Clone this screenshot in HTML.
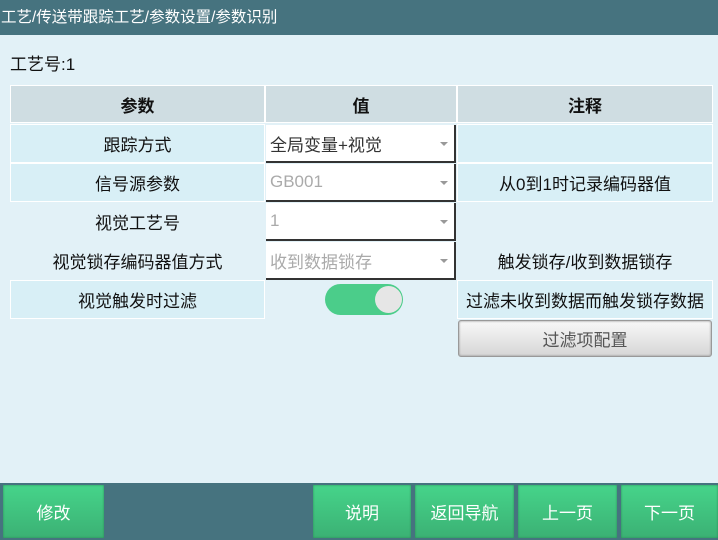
<!DOCTYPE html>
<html><head><meta charset="utf-8"><style>
*{margin:0;padding:0;box-sizing:border-box}
body{width:718px;height:540px;background:#e2f1f7;font-family:"Liberation Sans","Noto Sans CJK SC",sans-serif;position:relative;overflow:hidden;color:#111}
.hdr{position:absolute;left:0;top:0;width:718px;height:35px;background:#46737f;color:#fff;font-size:15.5px;line-height:35px;padding-left:1px}
.a{position:absolute;display:flex;align-items:center;justify-content:center;font-size:17px;white-space:nowrap}
.th{background:#cfdde2;font-weight:bold;border:1px solid #fff}
.lb{background:#d8eff6;border:1px solid #fff}
.dd{background:#fff;justify-content:flex-start;padding-left:4px;border-right:2px solid #333;border-bottom:2px solid #333;color:#333}
.dd.g{color:#aaa}
.dd:after{content:"";position:absolute;right:6px;top:50%;border:4px solid transparent;border-top:4px solid #999;margin-top:-1px}
.bar{position:absolute;left:0;top:483px;width:718px;height:57px;background:#46737f}
.btn{position:absolute;top:485px;height:53px;background:linear-gradient(#46d48a,#3bb174);color:#fff;font-size:17px;display:flex;align-items:center;justify-content:center;box-shadow:inset 0 0 2px #2a8a55}
</style></head><body>
<div class="hdr">工艺/传送带跟踪工艺/参数设置/参数识别</div>
<div class="a" style="left:10px;top:50px;height:24px;">工艺号:1</div>
<div class="a th" style="left:10px;top:85px;width:255px;height:38px">参数</div>
<div class="a th" style="left:265px;top:85px;width:192px;height:38px">值</div>
<div class="a th" style="left:457px;top:85px;width:256px;height:38px">注释</div>

<div class="a lb" style="left:10px;top:124px;width:255px;height:39px">跟踪方式</div>
<div class="a dd" style="left:266px;top:125px;width:190px;height:38px">全局变量+视觉</div>
<div class="a lb" style="left:457px;top:124px;width:256px;height:39px"></div>

<div class="a lb" style="left:10px;top:163px;width:255px;height:39px">信号源参数</div>
<div class="a dd g" style="left:266px;top:164px;width:190px;height:38px">GB001</div>
<div class="a lb" style="left:457px;top:163px;width:256px;height:39px">从0到1时记录编码器值</div>

<div class="a" style="left:10px;top:202px;width:255px;height:39px">视觉工艺号</div>
<div class="a dd g" style="left:266px;top:203px;width:190px;height:38px">1</div>

<div class="a" style="left:10px;top:241px;width:255px;height:39px">视觉锁存编码器值方式</div>
<div class="a dd g" style="left:266px;top:242px;width:190px;height:38px">收到数据锁存</div>
<div class="a" style="left:457px;top:241px;width:256px;height:39px">触发锁存/收到数据锁存</div>

<div class="a lb" style="left:10px;top:280px;width:255px;height:39px">视觉触发时过滤</div>
<div style="position:absolute;left:325px;top:284px;width:78px;height:31px;border-radius:16px;background:#4bcd8a"></div>
<div style="position:absolute;left:375px;top:286px;width:27px;height:27px;border-radius:50%;background:#e6e6e6"></div>
<div class="a lb" style="left:457px;top:280px;width:256px;height:39px">过滤未收到数据而触发锁存数据</div>

<div class="a" style="left:458px;top:320px;width:254px;height:37px;background:linear-gradient(#f8f8f8,#d6d6d6);border:1px solid #999;border-radius:3px;color:#555;box-shadow:inset 0 0 2px #888">过滤项配置</div>

<div class="bar"></div>
<div class="btn" style="left:3px;width:101px">修改</div>
<div class="btn" style="left:313px;width:98px">说明</div>
<div class="btn" style="left:415px;width:99px">返回导航</div>
<div class="btn" style="left:518px;width:99px">上一页</div>
<div class="btn" style="left:621px;width:97px">下一页</div>
</body></html>
